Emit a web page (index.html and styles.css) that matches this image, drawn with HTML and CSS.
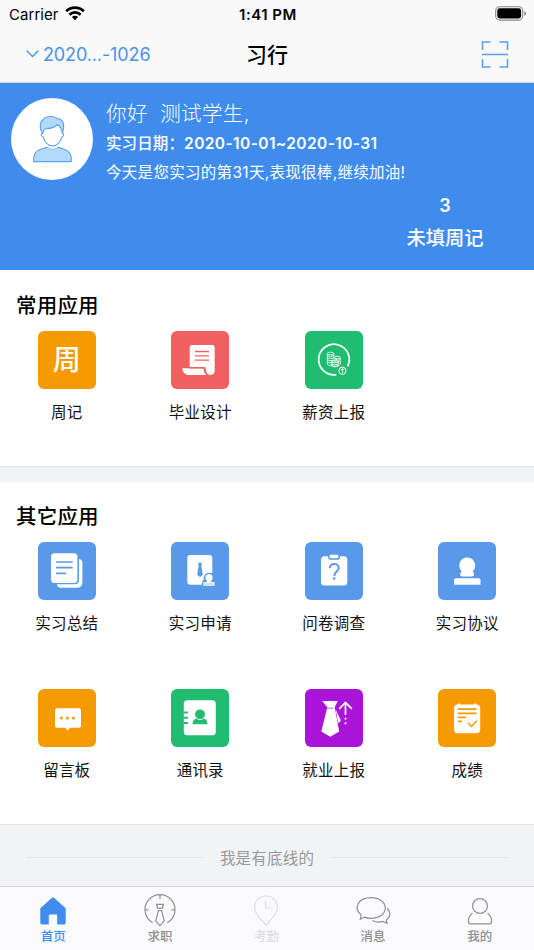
FILE: index.html
```html
<!DOCTYPE html>
<html lang="zh-CN">
<head>
<meta charset="utf-8">
<title>习行</title>
<link rel="stylesheet" href="styles.css">
</head>
<body>
<div class="app">
  <header class="top">
    <div class="status">
      <div class="carrier"><span>Carrier</span>
        <svg width="20" height="15" viewBox="0 0 20 15" fill="none" stroke="#000" stroke-width="2.7"><path d="M1.2 5.3a12.4 12.4 0 0 1 17.6 0M4.4 8.700a7.900 7.900 0 0 1 11.200 0"/><path d="M10 14.200l-3.100-3.100a4.400 4.400 0 0 1 6.200 0z" fill="#000" stroke="none"/></svg>
      </div>
      <div class="clock">1:41 PM</div>
      <svg class="battery" width="32" height="15" viewBox="0 0 32 15"><rect x=".7" y=".7" width="27" height="13.400" rx="4" fill="none" stroke="#888" stroke-width="1.100"/><rect x="2.300" y="2.300" width="23.800" height="10.200" rx="2.400"/><path d="M29.300 5v5q1.800-.8 1.800-2.500T29.300 5z" fill="#888"/></svg>
    </div>
    <nav class="nav">
      <div class="term"><svg width="13" height="8" viewBox="0 0 13 8" fill="none" stroke="#4793ee" stroke-width="1.400"><path d="M.7.8l5.800 5.800L12.300.8"/></svg><span>2020...-1026</span></div>
      <h1>习行</h1>
      <svg class="scan" width="28" height="28" viewBox="0 0 28 28" fill="none" stroke="#5a9ff0" stroke-width="1.600"><path d="M1.500 9V1h8M18.500 1h8v8M1.500 18v8h8M18.500 26h8v-8M1 13.500h26"/></svg>
    </nav>
  </header>

  <section class="hero">
    <div class="avatar">
      <svg width="82" height="82" viewBox="0 0 82 82" stroke="#5c9fea" stroke-width="1.100" stroke-linejoin="round"><path d="M22.700 63.600v-3.300c0-7 6-9.700 14-11.100 1.600 2.300 8 2.300 9.600 0 8 1.400 14 4.100 14 11.100v3.300z" fill="#b2daff"/><path d="M36.700 49.200c1.600 2.300 8 2.300 9.600 0v-4h-9.600z" fill="#fff" stroke="none"/><path d="M31.500 35c-3-3.500-3.300-10.500.5-13.300 2-3.400 10.500-4.800 15-.9 6 .5 7 7.700 4.200 14.200z" fill="#b2daff"/><path d="M31.800 35.500c-2-.7-2 3 .5 3.500 1.200 5 4.700 9 9.200 9s8-4 9.200-9c2.500-.5 2.500-4.200.5-3.500-.1-4-1.500-6.800-4.700-9-3.500 3.500-6.500 4-10.500 4-2.500.4-4.200 1.800-4.200 5z" fill="#fff"/></svg>
    </div>
    <div class="info">
      <p class="hello">你好&nbsp; 测试学生,</p>
      <p class="dates">实习日期：<span>2020-10-01~2020-10-31</span></p>
      <p class="cheer">今天是您实习的第31天,表现很棒,继续加油!</p>
    </div>
    <div class="pending"><b>3</b><span>未填周记</span></div>
  </section>

  <section class="group common">
    <h2>常用应用</h2>
    <div class="grid">
      <div class="item"><div class="tile orange"><span class="glyph">周</span></div><p>周记</p></div>
      <div class="item"><div class="tile red"><svg viewBox="0 0 58 58"><path d="M21.200 14h20.100q2.400 0 2.400 2.400v23.300a4.300 4.300 0 0 1-8.600 0l-1-3.700H18.700V16.400q0-2.400 2.500-2.400z" fill="#fff"/><path d="M11.400 37.300h21.200c0 3.500 1 5.800 3.400 6.700H18c-4.200 0-6.600-2.800-6.600-6.700z" fill="#fff"/><path d="M18 36.800h15.300c.2 4 1.200 6.300 4 7.300M24 20.500h14M24 24.800h14M24 29.100h14" fill="none" stroke="#f06060" stroke-width="1.300"/></svg></div><p>毕业设计</p></div>
      <div class="item"><div class="tile green"><svg viewBox="0 0 58 58" fill="none" stroke="#fff"><path d="M31.300 43.700A15.300 15.300 0 1 1 42.700 35.300" stroke-width="1.700"/><circle cx="37.400" cy="39.700" r="3.600"/><path d="M37.400 42v-4.500m-1.700 1.700l1.700-1.700 1.700 1.700" stroke-width=".8"/><g stroke-width=".8"><path d="M22.300 22.500v11q3 2 5.500.7M28.800 22.500v6M30 26.800v2.200M35.300 26.800v6.500q-.8 1-2 1.200M26.500 30.500v4.500q3.400 2 6.800 0v-4.500"/><ellipse cx="25.500" cy="22.500" rx="3.300" ry="1.300"/><ellipse cx="32.300" cy="26.500" rx="3" ry="1.200"/><ellipse cx="29.900" cy="30.500" rx="3.400" ry="1.300" fill="#80dba9"/><path d="M22.300 24.600q3.300 1.700 6.500 0m-6.500 2.100q3.300 1.700 6.500 0m-6.500 2.100q2.500 1.500 5 .5m-5 1.600q2 1.300 4 .8m4.700-3.100q2.500 1 4.300 0m-2 2.300q1 .3 2-.3m-9 2.200q3.400 2 6.800 0m-6.800 1.600q3.400 2 6.800 0"/></g></svg></div><p>薪资上报</p></div>
    </div>
  </section>

  <section class="group other">
    <h2>其它应用</h2>
    <div class="grid">
      <div class="item"><div class="tile blue"><svg viewBox="0 0 58 58"><path d="M41 17q3.400.5 3.400 3.500V40q0 5.800-5.800 5.800H23q-3.300 0-4.200-3.500h17.700q4.500 0 4.500-4.500z" fill="#fff"/><rect x="13" y="11.300" width="26.400" height="29.700" rx="3.500" fill="#fff"/><path d="M18.800 20H34M18.800 25.700H34M18.800 31.400h8.500" stroke="#5899e9" stroke-width="1.700" stroke-linecap="round"/></svg></div><p>实习总结</p></div>
      <div class="item"><div class="tile blue"><svg viewBox="0 0 58 58"><path d="M19.300 13h19q3 0 3 3v15.300c-5.300-1-9 2.300-8.600 6.200-1 1.200-1.700 2.200-1.700 5.200H19.300q-3 0-3-3V16q0-3 3-3z" fill="#fff"/><path d="M26.700 20.700h4.600l-1 2.500 1.500 9.500-2.800 2.400-2.800-2.400 1.500-9.500z" fill="#5899e9"/><circle cx="38" cy="35.700" r="5" fill="#5899e9"/><circle cx="38" cy="35.700" r="3.600" fill="#fff"/><path d="M36 37.500h4v2.400h2.600q1 0 1 1v2.800H32.400v-2.800q0-1 1-1H36z" fill="#fff"/><path d="M33 42h10" stroke="#5899e9" stroke-width=".6"/></svg></div><p>实习申请</p></div>
      <div class="item"><div class="tile blue"><svg viewBox="0 0 58 58"><rect x="16" y="14.300" width="26.300" height="29.300" rx="3.500" fill="#fff"/><rect x="23.200" y="11.500" width="12" height="6.200" rx="2.800" fill="#5899e9"/><rect x="24.600" y="12.800" width="9" height="3.400" rx="1.700" fill="#fff"/><path d="M24.800 26.200c0-5.800 9-5.500 9-.2 0 3.300-4.500 3.500-4.500 8" fill="none" stroke="#5899e9" stroke-width="1.900"/><circle cx="29.200" cy="36.500" r="1.300" fill="#5899e9"/></svg></div><p>问卷调查</p></div>
      <div class="item"><div class="tile blue"><svg viewBox="0 0 58 58" fill="#fff"><circle cx="29.200" cy="23.500" r="8"/><path d="M25 28.500h8.500l2.600 2.700q-.7 1.200 0 2.300-1 1-3 1h-8q-2 0-3-1 .7-1.100 0-2.300z"/><path d="M18 36.200h22.600q1.900 0 1.900 2v4.600H16v-4.600q0-2 2-2z"/></svg></div><p>实习协议</p></div>
      <div class="item"><div class="tile orange"><svg viewBox="0 0 58 58"><path d="M19 19.300h22q2 0 2 2v15.400q0 2-2 2h-8.800l-2.500 2.800-2.500-2.800H19q-2 0-2-2V21.300q0-2 2-2z" fill="#fff"/><g fill="#f59a00"><circle cx="23.500" cy="29" r="1.500"/><circle cx="29.500" cy="29" r="1.500"/><circle cx="35.500" cy="29" r="1.500"/></g></svg></div><p>留言板</p></div>
      <div class="item"><div class="tile green"><svg viewBox="0 0 58 58"><rect x="12.800" y="11.300" width="32" height="35" rx="3.500" fill="#fff"/><g fill="#20bd70"><path d="M12.500 22.500h3.700a1 1 0 0 1 0 2h-3.700zM12.500 27.800h3.700a1 1 0 0 1 0 2h-3.700zM12.500 33.100h3.700a1 1 0 0 1 0 2h-3.700z"/><circle cx="29" cy="25.300" r="4.900"/><path d="M21.500 35.300c0-3.500 1.500-5 4-5.700q3.500 3 7 0c2.500.7 4 2.200 4 5.700z"/></g></svg></div><p>通讯录</p></div>
      <div class="item"><div class="tile purple"><svg viewBox="0 0 58 58"><path d="M17.300 12h15.500l-3.100 6.200 4.500 24.300-9 5.300-8.900-5.300 6-24.300z" fill="#fff"/><path d="M22 19.200h6.400" stroke="#aa14d8" stroke-width=".7"/><path d="M30.700 20.500l5.200 11-2.700 2.800z" fill="#fff"/><path d="M40.500 26V13.800M34.200 19.800l6.300-6.400 6.300 6.400" fill="none" stroke="#fff" stroke-width="1.700"/><path d="M39.600 28.800h1.800v1.800h-1.800zM39.600 33.500h1.800v1.800h-1.800z" fill="#fff"/></svg></div><p>就业上报</p></div>
      <div class="item"><div class="tile orange"><svg viewBox="0 0 58 58"><path d="M19.500 15.500L21 14l1.500 1.500h13L37 14l1.500 1.500q3.700 0 3.700 3.500v21.500q0 3.700-3.700 3.700h-19q-3.500 0-3.500-3.700V19q0-3.500 3.500-3.500z" fill="#fff"/><path d="M19.700 20.200h19M19.700 24.300h19M19.700 28.300H28M19.700 32.300h4.200" stroke="#f59a00" stroke-width="1.700"/><path d="M30.200 34l3.300 3.500 5.300-5.700" fill="none" stroke="#f59a00" stroke-width="1.500"/></svg></div><p>成绩</p></div>
    </div>
  </section>

  <div class="bottom-line"><i></i><span>我是有底线的</span><i></i></div>

  <footer class="tabs">
    <div class="tab active"><svg viewBox="0 0 36 34"><path d="M18 3.300q.5 0 1 .4l11.700 10.500v14.600q0 1.700-1.700 1.700h-6.800v-9q0-1-1-1h-6.400q-1 0-1 1v9H7q-1.700 0-1.700-1.700V14.200L17 3.700q.5-.4 1-.4z" fill="#3f8cec"/></svg><span>首页</span></div>
    <div class="tab"><svg viewBox="0 0 36 34"><path d="M10.700 28.700a15 15 0 1 1 14.600 0M18 1.300v4M3 15.800h3.500M33 15.800h-3.500M14.500 10.300h7l-1.300 4h-4.400zM16.300 16.700h3.400l2.500 10.500-4.200 4.500-4.200-4.500z"/></svg><span>求职</span></div>
    <div class="tab disabled"><svg viewBox="0 0 36 34"><path d="M18 31C14 27 6.500 18.500 6.500 13.500a11.500 11.500 0 0 1 23 0C29.500 18.500 22 27 18 31zM17.500 7.500V14h7"/></svg><span>考勤</span></div>
    <div class="tab"><svg viewBox="0 0 36 34"><path d="M5.300 25.200l.9-4.300C-2 14 3 3.600 16 3.600c8 0 14.300 4.400 14.300 10.400S24 24.300 16 24.300c-2.400 0-4.800-.4-6.600-1.200z"/><path d="M32 14.500c4.300 3.500 3.500 8.700-.7 11.500l.7 3.200-4.200-1.800c-3.500 1.200-7.700.6-10.300-.9"/></svg><span>消息</span></div>
    <div class="tab"><svg viewBox="0 0 36 34"><circle cx="18" cy="12" r="7.400"/><path d="M10.500 19.300c-2.600 1.600-4.100 4.300-4.100 8.200q0 2.300 2.300 2.300h18.600q2.300 0 2.300-2.300c0-3.900-1.500-6.600-4.100-8.200"/></svg><span>我的</span></div>
  </footer>
</div>
</body>
</html>
```
FILE: styles.css
```css
* { box-sizing: border-box; }
body, h1, h2, p { margin: 0; }
body {
  font-family: Inter, "Noto Sans CJK SC", sans-serif;
  color: #000;
  background: #fff;
}
svg { display: block; flex: none; }
.app { width: 534px; height: 950px; overflow: hidden; }

.top { height: 83px; background: #f9f9f9; border-bottom: 1px solid #d5d5d8; }
.status, .nav {
  display: grid;
  grid-template-columns: 1fr auto 1fr;
  align-items: center;
}
.status { height: 28px; padding: 0 7px 0 9px; }
.carrier { display: flex; align-items: center; gap: 6px; font-size: 15px; }
.carrier span { letter-spacing: .05px; }
.carrier svg { margin-top: -2px; }
.clock { font-size: 15px; font-weight: 600; letter-spacing: .5px; }
.battery { justify-self: end; margin-top: -2px; }
.nav { height: 54px; padding: 0 25px 0 26px; }
.term { display: flex; align-items: center; gap: 4px; color: #4793ee; font-size: 18px; letter-spacing: -.12px; }
.term svg { margin-top: -2px; }
.term span { margin-top: -1px; }
h1 { font-size: 21px; line-height: 30px; font-weight: 500; transform: translateX(-.5px); }
.scan { justify-self: end; }

.hero {
  height: 187px;
  padding: 15px 11px 0;
  display: grid;
  grid-template-columns: 82px 1fr;
  grid-template-rows: 95px auto;
  column-gap: 13px;
  background: #3f8cec;
  color: #fff;
}
.avatar { width: 82px; height: 82px; border-radius: 50%; background: #fff; }
.hello { font-size: 20.500px; line-height: 31px; font-weight: 300; letter-spacing: .4px; white-space: pre; }
.dates { font-size: 15.500px; line-height: 29px; font-weight: 500; letter-spacing: .12px; white-space: nowrap; }
.dates span { font-weight: 600; letter-spacing: .4px; }
.cheer { font-size: 15.500px; line-height: 30px; font-weight: 400; letter-spacing: .3px; white-space: nowrap; }
.pending {
  grid-column: 2;
  justify-self: end;
  display: flex;
  flex-direction: column;
  align-items: center;
  gap: 4px;
  width: 156px;
  font-size: 19.300px;
  line-height: 32px;
  font-weight: 500;
}
.pending b { font-size: 18px; line-height: 25px; font-weight: 600; }

.group { background: #fff; }
.common { height: 197px; }
.other { height: 358px; border-top: 15px solid #f2f3f5; box-shadow: inset 0 -1px #e5e6e8; }
h2 { padding: 18px 16px 0; height: 60px; font-size: 20.500px; line-height: 34px; font-weight: 500; letter-spacing: .2px; }
.common { box-shadow: inset 0 -1px #e5e6e8; }
.common h2 { height: 61px; padding-top: 19px; }
.grid { display: grid; grid-template-columns: repeat(4, 133.500px); grid-auto-rows: 146.500px; }
.item { display: flex; flex-direction: column; align-items: center; }
.item p { margin-top: 12px; font-size: 15.500px; line-height: 24px; letter-spacing: .2px; color: #111; }
.tile { display: flex; align-items: center; justify-content: center; width: 58px; height: 58px; border-radius: 6px; }
.tile svg { width: 58px; height: 58px; }
.glyph { color: #fff; font-size: 28px; line-height: 40px; font-weight: 500; }
.orange { background: #f59a00; }
.red { background: #f06060; }
.green { background: #20bd70; }
.blue { background: #5899e9; }
.purple { background: #aa14d8; }

.bottom-line {
  display: flex;
  align-items: center;
  justify-content: center;
  gap: 17px;
  height: 61px;
  padding: 4px 26px 0;
  background: #f2f3f5;
  color: #999;
  font-size: 15.500px;
  letter-spacing: .2px;
}
.bottom-line span { margin-top: -2px; }
.bottom-line i { flex: 1; height: 1px; background: #e3e4e6; }

.tabs { display: grid; grid-template-columns: repeat(5, 1fr); height: 64px; padding-right: 1px; border-top: 1px solid #d2d3d6; background: #fafafc; }
.tab { display: flex; flex-direction: column; align-items: center; padding-top: 7px; color: #8e8e90; font-size: 12.500px; line-height: 18px; font-weight: 500; }
.tab svg { width: 36px; height: 34px; overflow: visible; fill: none; stroke: #929294; stroke-width: 1.200; }
.tab.active { color: #3f8cec; }
.tab.active svg { stroke: none; }
.tab.disabled { color: #dedee0; }
.tab.disabled svg { stroke: #dedee0; }
```
